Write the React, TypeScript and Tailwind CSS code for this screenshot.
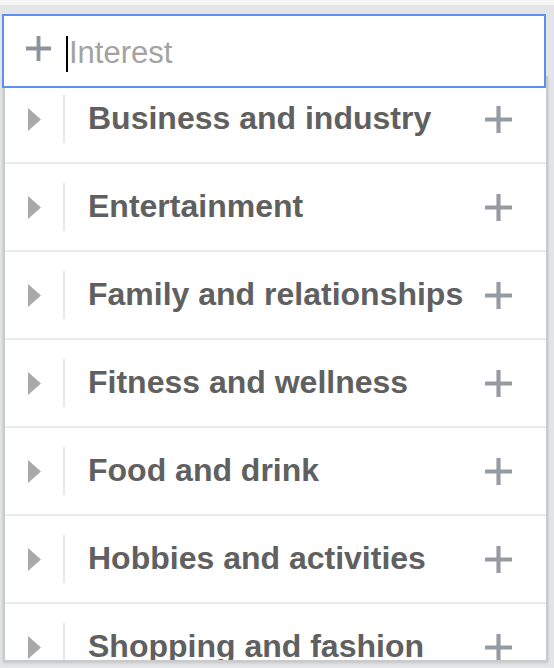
const interests = [
  "Business and industry",
  "Entertainment",
  "Family and relationships",
  "Fitness and wellness",
  "Food and drink",
  "Hobbies and activities",
  "Shopping and fashion",
];

const Plus = ({ size, color }: { size: number; color: string }) => (
  <svg width={size} height={size} viewBox="0 0 28 28" fill="none">
    <path d="M14 1v26M1 14h26" stroke={color} strokeWidth="4" />
  </svg>
);

const Row = ({ label }: { label: string }) => (
  <div className="flex h-[88px] shrink-0 items-center border-b-2 border-[#e9eaec]">
    <svg width="13" height="23" viewBox="0 0 13 23" className="ml-[23px] shrink-0">
      <path d="M0 0L13 11.5L0 23Z" fill="#a9a9a9" />
    </svg>
    <div className="ml-[22px] h-[48px] w-[2px] shrink-0 bg-[#e6e7e9]" />
    <div className="ml-[23px] -mt-[2px] whitespace-nowrap font-['Liberation_Sans',Arial,sans-serif] text-[32px] font-bold text-[#606060]">
      {label}
    </div>
    <div className="ml-auto mr-[33px] shrink-0">
      <Plus size={29} color="#959aa3" />
    </div>
  </div>
);

export default function App() {
  return (
    <div className="h-[668px] w-[554px] overflow-hidden border-t-[5px] border-[#f6f6f6] bg-[#e4e5e7] pt-[9px]">
      <div className="relative z-10 ml-[2px] flex h-[74px] w-[544px] items-center border-2 border-[#5b8ff0] bg-white">
        <div className="ml-[21px] -mt-[5px]">
          <Plus size={27} color="#8e949d" />
        </div>
        <div className="ml-[14px] mt-[6px] h-[36px] w-[2px] bg-black" />
        <div className="ml-[1px] mt-[5px] font-['Liberation_Sans',Arial,sans-serif] text-[31px] text-[#a3a3a3]">
          Interest
        </div>
      </div>
      <div className="-mt-[12px] ml-[3px] flex h-[586px] w-[545px] flex-col overflow-hidden border-x-2 border-b-2 border-[#c9cacc] bg-white shadow-[0_1px_3px_rgba(0,0,0,0.15)]">
        {interests.map((item) => (
          <Row key={item} label={item} />
        ))}
      </div>
    </div>
  );
}
